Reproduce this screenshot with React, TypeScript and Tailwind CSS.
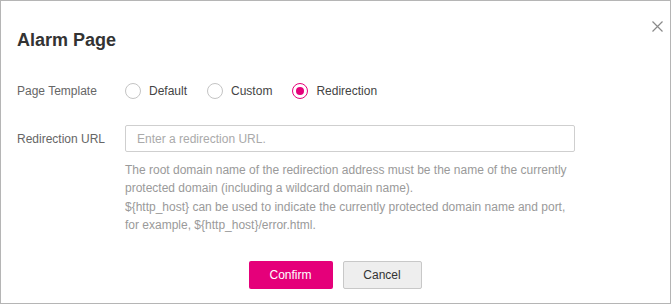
import { useState } from "react";

const PINK = "#e5007a";

const TEMPLATES = ["Default", "Custom", "Redirection"];

const HINT_1 =
  "The root domain name of the redirection address must be the name of the currently protected domain (including a wildcard domain name).";
const HINT_2 =
  "${http_host} can be used to indicate the currently protected domain name and port, for example, ${http_host}/error.html.";

function Radio({ label, checked, onClick }: { label: string; checked: boolean; onClick: () => void }) {
  return (
    <button type="button" onClick={onClick} className="flex items-center gap-2 text-[12px] text-[#444]">
      <span
        className={
          checked
            ? "flex h-4 w-4 items-center justify-center rounded-full border-[1.5px] border-[#e5007a]"
            : "flex h-4 w-4 items-center justify-center rounded-full border border-[#c4c4c4]"
        }
      >
        {checked && <span className="h-2 w-2 rounded-full bg-[#e5007a]" />}
      </span>
      {label}
    </button>
  );
}

export default function App() {
  const [tpl, setTpl] = useState("Redirection");

  return (
    <div
      className="relative h-[304px] w-[671px] border border-[#b5b5b5] bg-white"
      style={{ fontFamily: '"Liberation Sans", Arial, sans-serif' }}
    >
      <button type="button" className="absolute right-[6px] top-[19px] p-[1px] text-[#8a8a8a]" aria-label="Close">
        <svg width="11" height="11" viewBox="0 0 11 11" fill="none" stroke="currentColor" strokeWidth="1.2">
          <path d="M0.5 0.5 L10.5 10.5 M10.5 0.5 L0.5 10.5" />
        </svg>
      </button>

      <h1 className="pl-4 pt-[27px] text-[18px] font-bold leading-6 text-[#333]">Alarm Page</h1>

      <div className="mt-[30px] flex items-center pl-4">
        <div className="w-[108px] text-[12px] text-[#666]">Page Template</div>
        <div className="flex items-center gap-5">
          {TEMPLATES.map((t) => (
            <Radio key={t} label={t} checked={tpl === t} onClick={() => setTpl(t)} />
          ))}
        </div>
      </div>

      <div className="mt-[25px] flex pl-4">
        <div className="w-[108px] pt-[7px] text-[12px] leading-[15px] text-[#666]">Redirection URL</div>
        <div>
          <input
            className="h-[27px] w-[450px] rounded-[2px] border border-[#cfcfcf] px-[11px] text-[12px] text-[#333] outline-none placeholder:text-[#aaa]"
            placeholder="Enter a redirection URL."
          />
          <div className="mt-[9px] w-[450px] text-[12px] leading-[18.4px] text-[#9a9a9a]">
            <p>{HINT_1}</p>
            <p>{HINT_2}</p>
          </div>
        </div>
      </div>

      <div className="mt-[26px] flex justify-center gap-[10px] pr-[1px]">
        <button
          type="button"
          className="h-[28px] w-[84px] rounded-[2px] text-[12px] text-white"
          style={{ backgroundColor: PINK }}
        >
          Confirm
        </button>
        <button
          type="button"
          className="h-[28px] w-[79px] rounded-[2px] border border-[#c8c8c8] bg-[#eeeeee] text-[12px] text-[#333]"
        >
          Cancel
        </button>
      </div>
    </div>
  );
}
